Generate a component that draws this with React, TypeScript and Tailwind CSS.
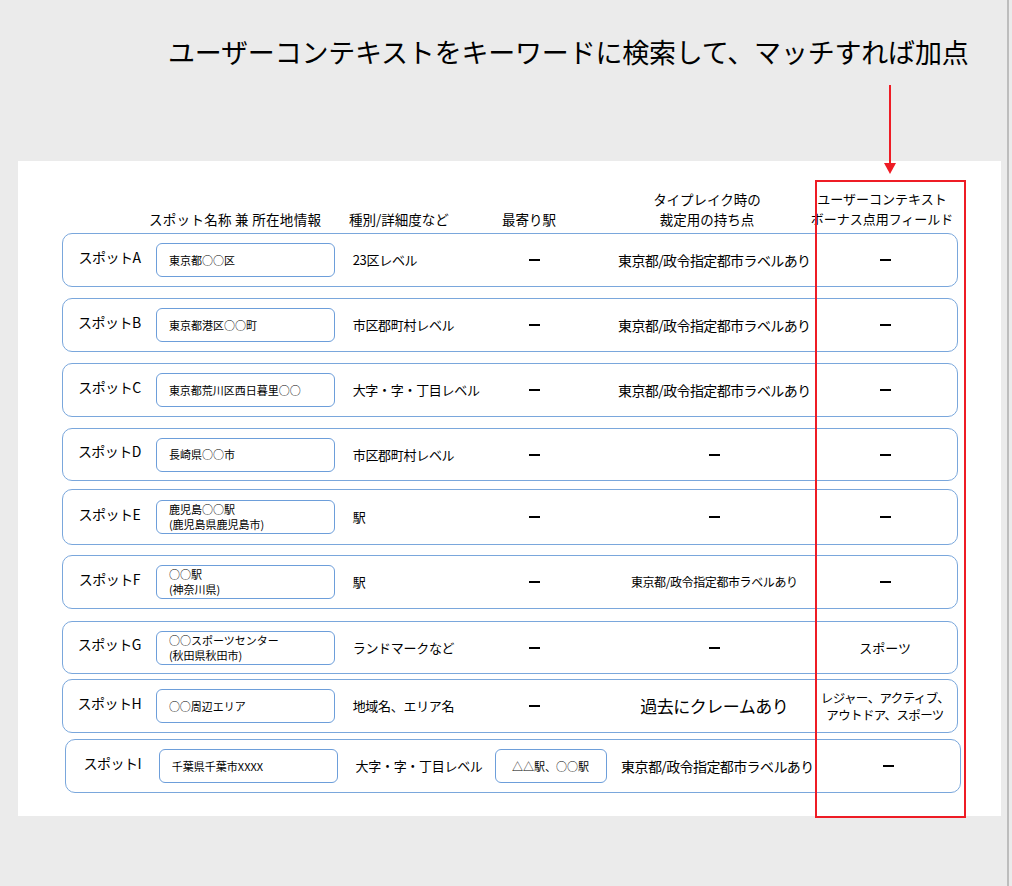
import React from "react";

type Row = { label: string; box: string[]; type: string; station: React.ReactNode; tie: React.ReactNode; bonus: React.ReactNode; h: number; mt: number; shift?: number };

const D = <span className="block w-[11px] h-[2px] bg-black" />;
const T = <span className="text-[14px] tracking-[-0.6px] whitespace-nowrap">東京都/政令指定都市ラベルあり</span>;

const rows: Row[] = [
  { label: "スポットA", box: ["東京都○○区"], type: "23区レベル", station: D, tie: T, bonus: D, h: 54, mt: 0 },
  { label: "スポットB", box: ["東京都港区○○町"], type: "市区郡町村レベル", station: D, tie: T, bonus: D, h: 54, mt: 11 },
  { label: "スポットC", box: ["東京都荒川区西日暮里○○"], type: "大字・字・丁目レベル", station: D, tie: T, bonus: D, h: 54, mt: 11 },
  { label: "スポットD", box: ["長崎県○○市"], type: "市区郡町村レベル", station: D, tie: D, bonus: D, h: 53, mt: 11 },
  { label: "スポットE", box: ["鹿児島○○駅", "(鹿児島県鹿児島市)"], type: "駅", station: D, tie: D, bonus: D, h: 56, mt: 8 },
  { label: "スポットF", box: ["○○駅", "(神奈川県)"], type: "駅", station: D, tie: <span className="text-[12px] tracking-[-0.4px] whitespace-nowrap">東京都/政令指定都市ラベルあり</span>, bonus: D, h: 54, mt: 10 },
  { label: "スポットG", box: ["○○スポーツセンター", "(秋田県秋田市)"], type: "ランドマークなど", station: D, tie: D, bonus: <span className="text-[13px]">スポーツ</span>, h: 53, mt: 12 },
  { label: "スポットH", box: ["○○周辺エリア"], type: "地域名、エリア名", station: D, tie: <span className="text-[17px] tracking-[-0.5px]">過去にクレームあり</span>, bonus: <span className="text-[12.5px] leading-[17px] block whitespace-nowrap tracking-[-0.6px]">レジャー、アクティブ、<br />アウトドア、スポーツ</span>, h: 54, mt: 5 },
  { label: "スポットI", box: ["千葉県千葉市XXXX"], type: "大字・字・丁目レベル", station: <span className="w-[112px] h-[34px] border border-[#6d9eda] rounded-[6px] flex items-center justify-center text-[11px] shrink-0 ml-[26px]">△△駅、○○駅</span>, tie: T, bonus: D, h: 54, mt: 6, shift: 3 },
];

export default function App() {
  return (
    <div className="relative w-[1012px] h-[886px] bg-[#ebebeb] overflow-hidden text-black" style={{ fontFamily: '"Noto Sans CJK JP", "Noto Sans", sans-serif' }}>
      <div className="absolute left-[1007px] top-0 w-[2px] h-full bg-[#bdbdbd]" />
      <div className="pt-[30px] pl-[168px] text-[27px] leading-[44px] tracking-[-0.2px] whitespace-nowrap">ユーザーコンテキストをキーワードに検索して、マッチすれば加点</div>
      <div className="absolute left-[18px] top-[161px] w-[983px] h-[655px] bg-white">
        <div className="flex items-end h-[72px] text-[13.5px] pb-[4px] whitespace-nowrap">
          <div className="w-[131px]" />
          <div className="w-[200px] tracking-[0.3px]">スポット名称 兼 所在地情報</div>
          <div className="w-[153px]">種別/詳細度など</div>
          <div className="w-[105px]">最寄り駅</div>
          <div className="w-[200px] text-center leading-[20px]">タイプレイク時の<br />裁定用の持ち点</div>
          <div className="w-[150px] text-center leading-[20px] text-[13px]">ユーザーコンテキスト<br />ボーナス点用フィールド</div>
        </div>
        {rows.map((r, i) => (
          <div key={i} className="flex items-center border border-[#7aa7dc] rounded-[10px] w-[896px]" style={{ height: r.h, marginTop: r.mt, marginLeft: 44 + (r.shift ?? 0) }}>
            <div className="w-[93px] text-center text-[14px] tracking-[-0.5px] -mt-[6px]">{r.label}</div>
            <div className="w-[179px] h-[34px] border border-[#6d9eda] rounded-[6px] flex flex-col justify-center pl-[12px] text-[11px] leading-[15px]">
              {r.box.map((b, j) => <div key={j}>{b}</div>)}
            </div>
            <div className="w-[145px] pl-[18px] text-[13px] whitespace-nowrap tracking-[-0.3px]">{r.type}</div>
            <div className="w-[120px] flex justify-center pr-[10px]">{r.station}</div>
            <div className="w-[230px] flex justify-center">{r.tie}</div>
            <div className="w-[128px] flex justify-center text-center pr-[16px]">{r.bonus}</div>
          </div>
        ))}
      </div>
      <div className="absolute left-[815px] top-[180px] w-[151px] h-[638px] border-2 border-[#ee1c25]" />
      <div className="absolute left-[889px] top-[85px] w-[2px] h-[80px] bg-[#ee1c25]" />
      <svg className="absolute left-[884px] top-[163px]" width="12" height="12"><polygon points="0,0 12,0 6,11" fill="#ee1c25" /></svg>
    </div>
  );
}
